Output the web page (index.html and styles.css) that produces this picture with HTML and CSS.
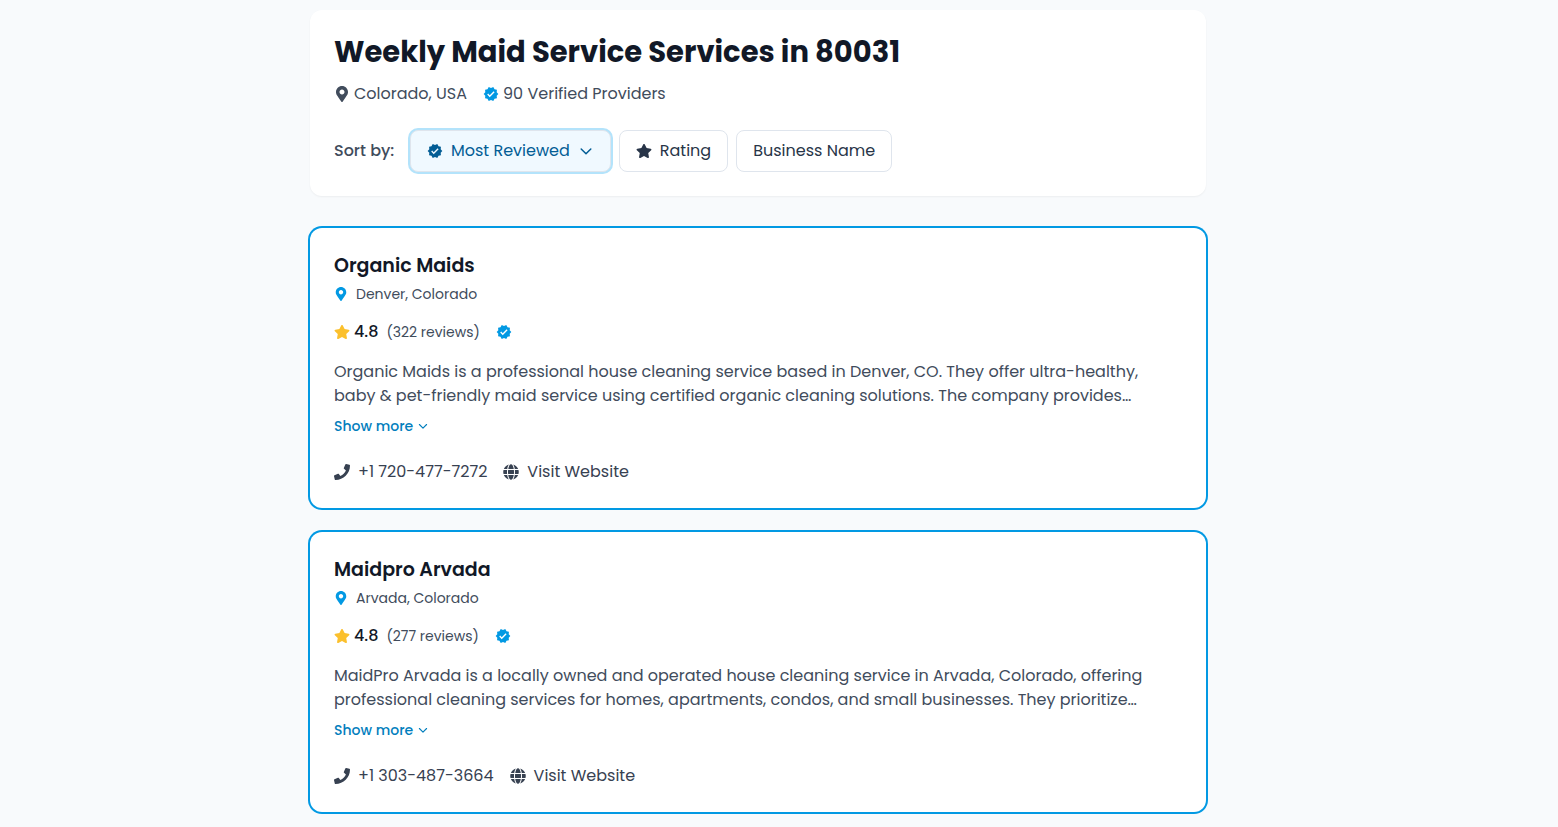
FILE: index.html
```html
<!DOCTYPE html>
<html lang="en">
<head>
<meta charset="utf-8">
<meta name="viewport" content="width=device-width, initial-scale=1">
<title>Weekly Maid Service Services in 80031</title>
<link rel="stylesheet" href="styles.css">
</head>
<body>
<svg class="sprite" aria-hidden="true">
  <symbol id="pin" viewBox="0 0 384 512"><path d="M172.268 501.67C26.97 291.031 0 269.413 0 192 0 85.961 85.961 0 192 0s192 85.961 192 192c0 77.413-26.97 99.031-172.268 309.67-9.535 13.774-29.93 13.773-39.464 0zM192 272c44.183 0 80-35.817 80-80s-35.817-80-80-80-80 35.817-80 80 35.817 80 80 80z"/></symbol>
  <symbol id="verified" viewBox="0 0 24 24"><path d="M23 12l-2.44-2.79.34-3.69-3.61-.82-1.89-3.2L12 2.96 8.6 1.5 6.71 4.69 3.1 5.5l.34 3.7L1 12l2.44 2.79-.34 3.7 3.61.82L8.6 22.5l3.4-1.47 3.4 1.46 1.89-3.19 3.61-.82-.34-3.69L23 12zm-12.91 4.72l-3.8-3.81 1.48-1.48 2.32 2.33 5.85-5.87 1.48 1.48-7.33 7.35z"/></symbol>
  <symbol id="star" viewBox="0 0 576 512"><path d="M259.3 17.8L194 150.2 47.9 171.5c-26.2 3.8-36.7 36.1-17.7 54.6l105.7 103-25 145.5c-4.5 26.3 23.2 46 46.4 33.7L288 439.6l130.7 68.7c23.2 12.2 50.9-7.4 46.4-33.7l-25-145.5 105.7-103c19-18.5 8.5-50.8-17.7-54.6L382 150.2 316.7 17.8c-11.7-23.6-45.6-23.9-57.4 0z"/></symbol>
  <symbol id="phone" viewBox="0 0 512 512"><path d="M493.4 24.6l-104-24c-11.3-2.6-22.9 3.3-27.5 13.9l-48 112c-4.2 9.8-1.4 21.3 6.9 28l60.6 49.6c-36 76.7-98.9 140.5-177.2 177.2l-49.6-60.6c-6.8-8.3-18.2-11.1-28-6.9l-112 48C3.9 366.5-2 378.1.6 389.4l24 104C27.1 504.2 36.7 512 48 512c256.1 0 464-207.5 464-464 0-11.2-7.7-20.9-18.6-23.4z"/></symbol>
  <symbol id="globe" viewBox="0 0 496 512"><path d="M336.5 160C322 70.7 287.8 8 248 8s-74 62.7-88.5 152h177zM152 256c0 22.2 1.2 43.5 3.3 64h185.3c2.1-20.5 3.3-41.8 3.3-64s-1.2-43.5-3.3-64H155.3c-2.1 20.5-3.3 41.8-3.3 64zm324.7-96c-28.6-67.9-86.5-120.4-158-141.6 24.4 33.8 41.2 84.7 50 141.6h108zM177.2 18.4C105.8 39.6 47.8 92.1 19.3 160h108c8.7-56.9 25.5-107.8 49.9-141.6zM487.4 192H372.7c2.1 21 3.3 42.5 3.3 64s-1.2 43-3.3 64h114.6c5.5-20.5 8.6-41.8 8.6-64s-3.1-43.5-8.5-64zM120 256c0-21.5 1.2-43 3.3-64H8.6C3.2 212.5 0 233.8 0 256s3.2 43.5 8.6 64h114.6c-2-21-3.2-42.5-3.2-64zm39.5 96c14.5 89.3 48.7 152 88.5 152s74-62.7 88.5-152h-177zm159.3 141.6c71.4-21.2 129.4-73.7 158-141.6h-108c-8.8 56.9-25.6 107.8-50 141.6zM19.3 352c28.6 67.9 86.5 120.4 158 141.6-24.4-33.8-41.2-84.7-50-141.6h-108z"/></symbol>
  <symbol id="chevron" viewBox="0 0 16 16"><path d="M3.2 6L8 10.800L12.800 6" fill="none" stroke="currentColor" stroke-width="1.500" stroke-linecap="round" stroke-linejoin="round"/></symbol>
</svg>
<main class="page">
  <header class="panel">
    <h1 class="title">Weekly Maid Service Services in 80031</h1>
    <div class="meta">
      <span class="meta-item"><svg class="icon"><use href="#pin"/></svg>Colorado, USA</span>
      <span class="meta-item"><svg class="icon icon-blue"><use href="#verified"/></svg>90 Verified Providers</span>
    </div>
    <div class="sort" role="group" aria-labelledby="sort-label">
      <span class="sort-label" id="sort-label">Sort by:</span>
      <button class="sort-button sort-button-active" type="button" aria-pressed="true"><svg class="icon"><use href="#verified"/></svg>Most Reviewed<svg class="icon"><use href="#chevron"/></svg></button>
      <button class="sort-button" type="button"><svg class="icon"><use href="#star"/></svg>Rating</button>
      <button class="sort-button" type="button">Business Name</button>
    </div>
  </header>
  <section class="list">
    <article class="card">
      <h2 class="name">Organic Maids</h2>
      <p class="place"><svg class="icon-small"><use href="#pin"/></svg>Denver, Colorado</p>
      <div class="rating"><svg class="icon icon-star"><use href="#star"/></svg><strong class="score">4.8</strong><span class="reviews">(322 reviews)</span><svg class="icon icon-blue"><use href="#verified"/></svg></div>
      <p class="about">Organic Maids is a professional house cleaning service based in Denver, CO. They offer ultra-healthy, baby &amp; pet-friendly maid service using certified organic cleaning solutions. The company provides…</p>
      <button class="more" type="button">Show more<svg class="icon-tiny"><use href="#chevron"/></svg></button>
      <div class="contact">
        <a class="contact-link" href="tel:+17204777272"><svg class="icon"><use href="#phone"/></svg>+1 720-477-7272</a>
        <a class="contact-link" href="#"><svg class="icon"><use href="#globe"/></svg>Visit Website</a>
      </div>
    </article>
    <article class="card">
      <h2 class="name">Maidpro Arvada</h2>
      <p class="place"><svg class="icon-small"><use href="#pin"/></svg>Arvada, Colorado</p>
      <div class="rating"><svg class="icon icon-star"><use href="#star"/></svg><strong class="score">4.8</strong><span class="reviews">(277 reviews)</span><svg class="icon icon-blue"><use href="#verified"/></svg></div>
      <p class="about">MaidPro Arvada is a locally owned and operated house cleaning service in Arvada, Colorado, offering professional cleaning services for homes, apartments, condos, and small businesses. They prioritize…</p>
      <button class="more" type="button">Show more<svg class="icon-tiny"><use href="#chevron"/></svg></button>
      <div class="contact">
        <a class="contact-link" href="tel:+13034873664"><svg class="icon"><use href="#phone"/></svg>+1 303-487-3664</a>
        <a class="contact-link" href="#"><svg class="icon"><use href="#globe"/></svg>Visit Website</a>
      </div>
    </article>
  </section>
</main>
</body>
</html>
```
FILE: styles.css
```css
* { box-sizing: border-box; }
body {
  margin: 0;
  padding: 10px 42px 13px 0;
  background: #f8fafc;
  color: #414c5c;
  font: 16px/24px Poppins, Inter, sans-serif;
}
h1, h2, p { margin: 0; }
button { font: inherit; cursor: pointer; }
svg { flex: none; fill: currentColor; }
.sprite { display: none; }
.icon { width: 16px; height: 16px; }
.icon-small { width: 14px; height: 14px; color: #0299e3; }
.icon-tiny { width: 12px; height: 12px; }
.icon-blue { color: #0299e3; }
.icon-star { color: #fbc02d; }
.page { max-width: 896px; margin: 0 auto; }
.panel {
  padding: 24px;
  background: #fff;
  border-radius: 12px;
  box-shadow: 0 1px 2px rgba(0, 0, 0, 0.05);
}
.title { font-size: 29px; line-height: 36px; font-weight: 700; color: #111827; }
.meta { display: flex; flex-wrap: wrap; gap: 16px; margin-top: 12px; }
.meta-item { display: flex; align-items: center; gap: 4px; }
.sort { display: flex; flex-wrap: wrap; align-items: center; gap: 8px; margin-top: 24px; }
.sort-label { min-width: 68px; font-weight: 500; }
.sort-button {
  display: flex;
  align-items: center;
  gap: 8px;
  padding: 8px 16px;
  color: #283548;
  background: #fff;
  border: 1px solid #dfe5ed;
  border-radius: 8px;
}
.sort-button-active { color: #035d95; background: #f0f9ff; box-shadow: 0 0 0 2px #b3e3fb; }
.list { display: grid; gap: 24px; margin-top: 32px; }
.card { padding: 24px; background: #fff; border-radius: 12px; box-shadow: 0 0 0 2px #0299e3; }
.name { font-size: 19px; line-height: 28px; font-weight: 600; color: #111827; }
.place { display: flex; align-items: center; gap: 8px; margin-top: 4px; font-size: 14px; line-height: 20px; }
.rating { display: flex; align-items: center; margin-top: 16px; }
.score { margin-left: 4px; font-weight: 500; color: #111827; }
.reviews { margin: 0 16px 0 8px; font-size: 14px; }
.about { margin-top: 16px; }
.more {
  display: flex;
  align-items: center;
  gap: 4px;
  margin-top: 8px;
  padding: 0;
  border: 0;
  background: none;
  color: #027ebd;
  font-size: 14px;
  line-height: 20px;
  font-weight: 500;
}
.contact { display: flex; flex-wrap: wrap; gap: 16px; margin-top: 24px; }
.contact-link { display: flex; align-items: center; gap: 8px; color: #374151; text-decoration: none; }
```
